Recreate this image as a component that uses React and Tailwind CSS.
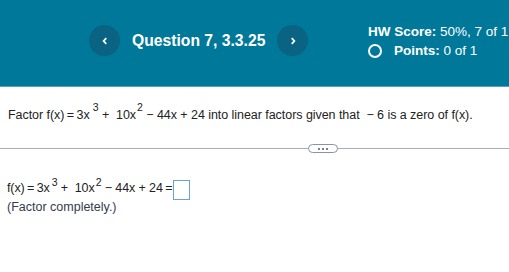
export default function App() {
  return (
    <div className="w-[509px] h-[272px] bg-white overflow-hidden font-['Liberation_Sans',Arial,sans-serif]">

      {/* HEADER */}
      <header className="h-[87px] bg-[#00789a] border-b border-[#5a9fb6] flex items-start text-white whitespace-nowrap">

        <div className="flex items-center pl-[89px] pt-[25px]">
          <button className="w-[31px] h-[31px] rounded-full bg-[#0b6383] flex items-center justify-center">
            <svg width="8" height="10" viewBox="0 0 8 10">
              <path d="M5.3 2.2 L2.6 5 L5.3 7.8" stroke="white" strokeWidth="1.7" fill="none" />
            </svg>
          </button>

          <span className="ml-[12px] w-[145px] text-[15.7px] font-bold">Question 7, 3.3.25</span>

          <button className="w-[31px] h-[31px] rounded-full bg-[#0b6383] flex items-center justify-center">
            <svg width="8" height="10" viewBox="0 0 8 10">
              <path d="M2.7 2.2 L5.4 5 L2.7 7.8" stroke="white" strokeWidth="1.7" fill="none" />
            </svg>
          </button>
        </div>

        <div className="ml-[60px] pt-[22px] text-[13.5px] leading-[19px]">
          <div>
            <span className="font-bold">HW Score:</span> 50%, 7 of 1
          </div>
          <div className="flex items-center">
            <span className="w-[14px] h-[14px] rounded-full border-2 border-white mr-[12px]"></span>
            <span className="font-bold">Points:</span>&nbsp;0 of 1
          </div>
        </div>

      </header>

      {/* QUESTION */}
      <p className="pl-[8px] pt-[20px] text-[12.5px] leading-[16px] tracking-[-0.05px] text-[#222] whitespace-pre">
        Factor f(x){"\u2009=\u2009"}3x<span className="relative -top-[8px] ml-[3px] text-[10.5px]">3</span> +  10x<span className="relative -top-[8px] ml-[1px] text-[10.5px]">2</span> − 44x + 24 into linear factors given that  − 6 is a zero of f(x).
      </p>

      {/* DIVIDER */}
      <div className="relative mt-[25px] h-px bg-[#a6adbd]">
        <span className="absolute left-[308px] -top-[4px] w-[30px] h-[9px] rounded-full border border-[#8a93a6] bg-white flex items-center justify-center gap-[2px]">
          <span className="w-[2px] h-[2px] rounded-full bg-[#555]"></span>
          <span className="w-[2px] h-[2px] rounded-full bg-[#555]"></span>
          <span className="w-[2px] h-[2px] rounded-full bg-[#555]"></span>
        </span>
      </div>

      {/* ANSWER */}
      <div className="pl-[7px] pt-[31px] text-[#222]">
        <div className="flex items-start h-[20px]">
          <span className="text-[12.5px] leading-[16px] tracking-[-0.1px] whitespace-pre">
            f(x){"\u2009=\u2009"}3x<span className="relative -top-[6px] ml-[2px] text-[10.5px]">3</span> +  10x<span className="relative -top-[6px] ml-[1px] text-[10.5px]">2</span> − 44x + 24{"\u2009="}
          </span>
          <span className="ml-[1px] w-[17px] h-[20px] border border-[#6d9de3]"></span>
        </div>
        <div className="text-[12.5px] leading-[14px] text-[#333b4d]">(Factor completely.)</div>
      </div>

    </div>
  );
}
